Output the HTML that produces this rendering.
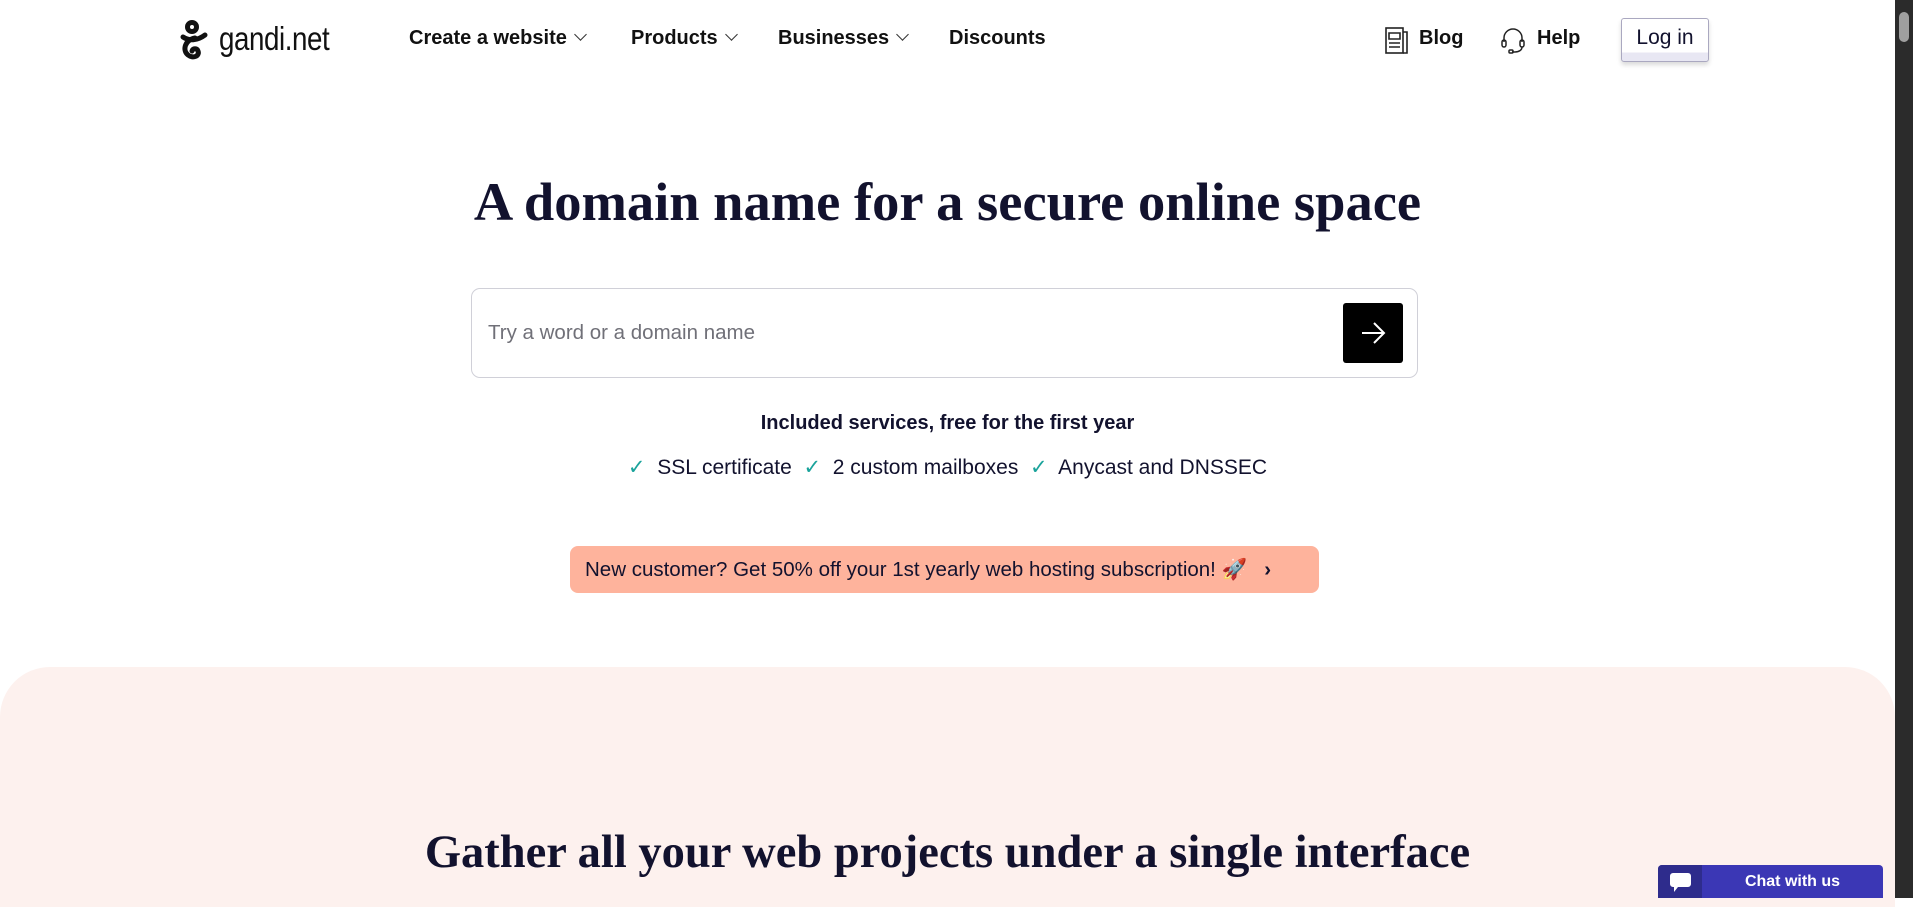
<!DOCTYPE html>
<html><head><meta charset="utf-8"><style>
*{margin:0;padding:0;box-sizing:border-box}
body{width:1913px;height:898px;overflow:hidden;background:#fff;font-family:"Liberation Sans",Arial,sans-serif;color:#12122e;position:relative}
.abs{position:absolute}
.nav{font-size:20px;font-weight:bold;top:27px;color:#111;white-space:nowrap}
.chev{display:inline-block;width:9px;height:9px;border-right:1.4px solid #333;border-bottom:1.4px solid #333;transform:rotate(45deg);margin-left:9px;position:relative;top:-5px}
h1,h2{font-family:"Liberation Serif",serif;font-weight:bold;color:#12122e;text-align:center;position:absolute;left:0;width:1895px}
.sb{position:absolute;right:0;top:0;width:18px;height:898px;background:#2b2b2b}
</style></head><body>
<svg class="abs" style="left:179px;top:19px" width="32" height="45" viewBox="0 0 32 45"><g fill="none" stroke="#111" stroke-width="5" stroke-linecap="round"><circle cx="13" cy="8" r="4.5"/><path d="M4 18c6 4 14 4 22-2M16 19c-10 2-13 12-7 17 5 4 12 1 10-4-1-3-5-3-6 0"/></g></svg>
<div class="abs" style="left:219px;top:20px;font-size:33px;color:#111;letter-spacing:-0.5px;transform:scaleX(0.84);transform-origin:left">gandi.net</div>
<div class="abs nav" style="left:409px">Create a website<span class="chev"></span></div>
<div class="abs nav" style="left:631px">Products<span class="chev"></span></div>
<div class="abs nav" style="left:778px">Businesses<span class="chev"></span></div>
<div class="abs nav" style="left:949px">Discounts</div>
<svg class="abs" style="left:1385px;top:27px" width="24" height="28" viewBox="0 0 24 28"><g fill="none" stroke="#222" stroke-width="1.6"><rect x="1" y="1" width="17" height="25"/><path d="M18 5h4v21h-4M4 6h11v6H4zM4 16h11M4 20h11"/></g></svg>
<div class="abs nav" style="left:1419px">Blog</div>
<svg class="abs" style="left:1501px;top:27px" width="24" height="27" viewBox="0 0 24 27"><g fill="none" stroke="#222" stroke-width="1.5"><path d="M3 15V11a9 9 0 0 1 18 0v4"/><rect x="1" y="13" width="4" height="7" rx="2"/><rect x="19" y="13" width="4" height="7" rx="2"/><path d="M21 20c0 3-3 5-7 5h-3"/><rect x="8" y="23" width="4" height="3" rx="1"/></g></svg>
<div class="abs nav" style="left:1537px">Help</div>
<div class="abs" style="left:1621px;top:18px;width:88px;height:44px;border:1px solid #aaa8c0;border-radius:3px;background:linear-gradient(#fff 80%,#e8e7f3 80%);box-shadow:0 3px 5px rgba(0,0,0,.15);font-size:21px;text-align:center;line-height:38px;color:#12122e">Log in</div>
<h1 style="top:170px;font-size:54.5px">A domain name for a secure online space</h1>
<div class="abs" style="left:471px;top:288px;width:947px;height:90px;border:1px solid #d0d0d8;border-radius:9px"></div>
<div class="abs" style="left:488px;top:321px;font-size:20.5px;color:#707078">Try a word or a domain name</div>
<div class="abs" style="left:1343px;top:303px;width:60px;height:60px;background:#000;border-radius:3px"><svg width="60" height="60" viewBox="0 0 60 60"><g fill="none" stroke="#fff" stroke-width="2"><path d="M19 30h22M31 20l10 10-10 10"/></g></svg></div>
<div class="abs" style="left:0;width:1895px;text-align:center;top:412px;font-size:20px;font-weight:bold">Included services, free for the first year</div>
<div class="abs" style="left:0;width:1895px;text-align:center;top:455px;font-size:21px;color:#12122e"><span style="color:#1aa39b">✓</span>&nbsp; SSL certificate &nbsp;<span style="color:#1aa39b">✓</span>&nbsp; 2 custom mailboxes &nbsp;<span style="color:#1aa39b">✓</span>&nbsp; Anycast and DNSSEC</div>
<div class="abs" style="left:570px;top:546px;width:749px;height:47px;background:#feb39c;border-radius:8px;font-size:20.5px;line-height:47px;padding-left:15px;color:#12122e;white-space:nowrap">New customer? Get 50% off your 1st yearly web hosting subscription! 🚀 &nbsp; <b>›</b></div>
<div class="abs" style="left:0;top:667px;width:1895px;height:240px;background:#fdf1ee;border-radius:50px 50px 0 0"></div>
<h2 style="top:826px;font-size:46.5px">Gather all your web projects under a single interface</h2>
<div class="abs" style="left:1658px;top:865px;width:225px;height:33px;background:#3b37b5;border-radius:4px 4px 0 0;overflow:hidden">
<div class="abs" style="left:0;top:0;width:44px;height:33px;background:#2e2c8c"></div>
<svg class="abs" style="left:11px;top:7px" width="23" height="22" viewBox="0 0 23 22"><path d="M4 1h15a3 3 0 0 1 3 3v8a3 3 0 0 1-3 3H9l-4 5v-5H4a3 3 0 0 1-3-3V4a3 3 0 0 1 3-3z" fill="#fff"/></svg>
<div class="abs" style="left:44px;width:181px;text-align:center;top:8px;color:#fff;font-weight:bold;font-size:16px">Chat with us</div></div>
<div class="sb"><div style="position:absolute;left:4px;top:12px;width:10px;height:30px;background:#9f9f9f;border-radius:5px"></div></div>
</body></html>
